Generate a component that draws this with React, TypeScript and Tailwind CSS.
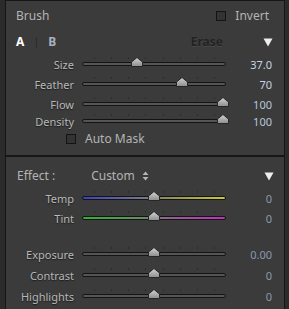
import React from "react";

const font = { fontFamily: '"Noto Sans", "Open Sans", sans-serif' };

function Thumb({ pos }: { pos: number }) {
  return (
    <svg
      width="12"
      height="10"
      viewBox="0 0 12 10"
      className="absolute top-[-5px]"
      style={{ left: `${pos - 6}px` }}
    >
      <defs>
        <linearGradient id="tg" x1="0" y1="0" x2="0" y2="1">
          <stop offset="0" stopColor="#d4d4d4" />
          <stop offset="1" stopColor="#8c8c8c" />
        </linearGradient>
      </defs>
      <path d="M0.5 9.5 V5 L6 0.5 L11.5 5 V9.5 Z" fill="url(#tg)" stroke="#262626" strokeWidth="1" />
    </svg>
  );
}

function Track({
  frac,
  color,
}: {
  frac: number;
  color?: string;
}) {
  const ticks = [0.08, 0.2, 0.32, 0.44, 0.56, 0.68, 0.8, 0.92];
  const pos = 3 + frac * 138;
  return (
    <div className="relative w-[144px] h-[4px]">
      {ticks.map((t, i) => (
        <div
          key={i}
          className="absolute top-[-5px] w-[1px] h-[2px] bg-[#2c2c2c]"
          style={{ left: `${t * 144}px` }}
        />
      ))}
      <div
        className="absolute inset-0 rounded-full border border-[#141414]"
        style={{ background: color ?? "#555555" }}
      />
      <Thumb pos={pos} />
    </div>
  );
}

function SliderRow({
  label,
  value,
  frac,
  color,
  valueClass,
  className,
}: {
  label: string;
  value: string;
  frac: number;
  color?: string;
  valueClass?: string;
  className?: string;
}) {
  return (
    <div className={`flex items-center h-[16px] ${className ?? ""}`}>
      <div className="w-[68px] text-right text-[11px] text-[#b8b8b8] leading-none [text-shadow:0_1px_1px_#1c1c1c]">
        {label}
      </div>
      <div className="ml-[8px]">
        <Track frac={frac} color={color} />
      </div>
      <div className={`w-[46px] text-right text-[11px] leading-none ${valueClass ?? "text-[#c8d2e2]"}`}>
        {value}
      </div>
    </div>
  );
}

export default function App() {
  return (
    <div className="w-[289px] h-[309px] bg-[#2b2b2b] flex overflow-hidden" style={font}>
      <div className="w-[5px]" />
      <div className="w-[280px] h-full bg-[#3b3b3b] border-x border-t border-[#161616] flex flex-col">
        {/* header */}
        <div className="h-[29px] flex items-center">
          <div className="ml-[10px] text-[12px] text-[#b4b4b4] leading-none">Brush</div>
          <div className="ml-auto flex items-center">
            <div className="w-[10px] h-[10px] border border-[#141414] bg-[#333333]" />
            <div className="ml-[9px] mr-[15px] text-[12px] text-[#b4b4b4] leading-none">Invert</div>
          </div>
        </div>
        {/* A / B row */}
        <div className="h-[24px] flex items-center">
          <div className="ml-[10px] text-[12px] font-bold text-white leading-none">A</div>
          <div className="ml-[12px] w-[1px] h-[11px] bg-[#2c2c2c]" />
          <div className="ml-[11px] text-[12px] font-bold text-[#a8b0c0] leading-none">B</div>
          <div className="ml-auto mr-[40px] text-[12px] font-bold text-[#232323] leading-none [text-shadow:0_1px_0_#474747]">
            Erase
          </div>
          <svg width="10" height="9" viewBox="0 0 10 9" className="mr-[11px]">
            <path d="M0.5 0.5 H9.5 L5 8.5 Z" fill="#eeeeee" />
          </svg>
        </div>
        <SliderRow label="Size" value="37.0" frac={0.38} className="mt-[2px]" />
        <SliderRow label="Feather" value="70" frac={0.7} className="mt-[4px]" />
        <SliderRow label="Flow" value="100" frac={1} className="mt-[4px]" valueClass="text-[#b8c6dc]" />
        <SliderRow label="Density" value="100" frac={1} className="mt-[1px]" valueClass="text-[#b8c6dc]" />
        <div className="h-[16px] mt-[2px] flex items-center">
          <div className="ml-[60px] w-[10px] h-[10px] border border-[#141414] bg-[#333333]" />
          <div className="ml-[9px] text-[12px] text-[#b4b4b4] leading-none">Auto Mask</div>
        </div>
        <div className="mt-[8px] h-[2px] bg-[#161616]" />
        {/* effect */}
        <div className="mt-[11px] h-[16px] flex items-center">
          <div className="ml-[11px] text-[12px] text-[#b4b4b4] leading-none">Effect :</div>
          <div className="ml-[36px] text-[12px] text-[#b4b4b4] leading-none">Custom</div>
          <svg width="7" height="10" viewBox="0 0 7 10" className="ml-[7px]">
            <path d="M3.5 0.5 L6.5 4 H0.5 Z M3.5 9.5 L6.5 6 H0.5 Z" fill="#b4b4b4" />
          </svg>
          <svg width="10" height="9" viewBox="0 0 10 9" className="ml-auto mr-[10px]">
            <path d="M0.5 0.5 H9.5 L5 8.5 Z" fill="#eeeeee" />
          </svg>
        </div>
        <SliderRow
          label="Temp"
          value="0"
          frac={0.5}
          className="mt-[6px]"
          color="linear-gradient(to right, #4040c0, #7a7a8a 45%, #8a8a60 55%, #c8c838)"
          valueClass="text-[#8a98b0]"
        />
        <SliderRow
          label="Tint"
          value="0"
          frac={0.5}
          className="mt-[4px]"
          color="linear-gradient(to right, #30b030, #6a8a6a 45%, #8a6a8a 55%, #c030c0)"
          valueClass="text-[#8a98b0]"
        />
        <SliderRow label="Exposure" value="0.00" frac={0.5} className="mt-[20px]" valueClass="text-[#8a98b0]" />
        <SliderRow label="Contrast" value="0" frac={0.5} className="mt-[5px]" valueClass="text-[#8a98b0]" />
        <SliderRow label="Highlights" value="0" frac={0.5} className="mt-[5px]" valueClass="text-[#8a98b0]" />
      </div>
      <div className="flex-1" />
    </div>
  );
}
